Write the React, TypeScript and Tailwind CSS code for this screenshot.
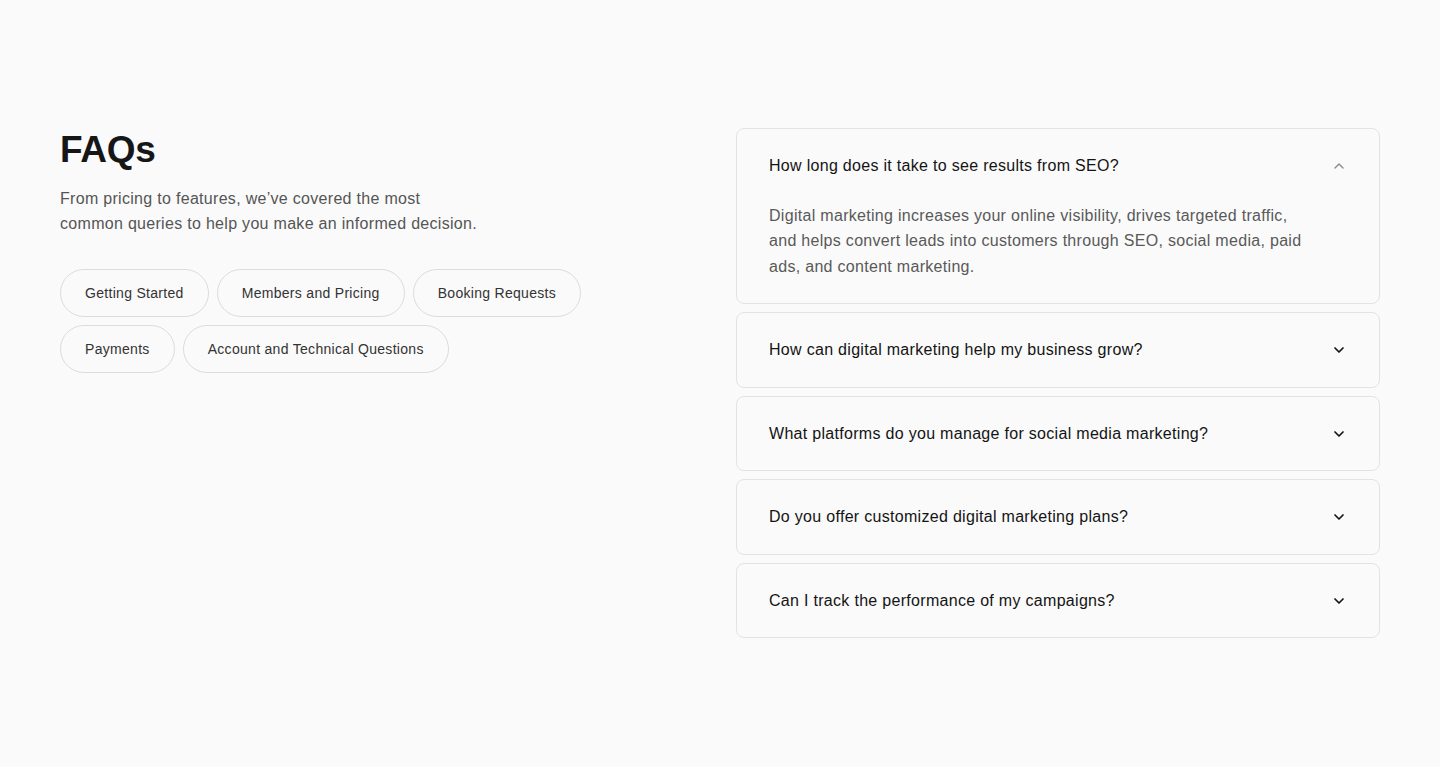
import React, { useState } from "react";

const categories = [
  "Getting Started",
  "Members and Pricing",
  "Booking Requests",
  "Payments",
  "Account and Technical Questions",
];

const faqs = [
  {
    q: "How long does it take to see results from SEO?",
    a: "Digital marketing increases your online visibility, drives targeted traffic, and helps convert leads into customers through SEO, social media, paid ads, and content marketing.",
  },
  { q: "How can digital marketing help my business grow?", a: "" },
  { q: "What platforms do you manage for social media marketing?", a: "" },
  { q: "Do you offer customized digital marketing plans?", a: "" },
  { q: "Can I track the performance of my campaigns?", a: "" },
];

function Chevron({ up }: { up?: boolean }) {
  return (
    <svg
      width="16"
      height="16"
      viewBox="0 0 24 24"
      fill="none"
      stroke="currentColor"
      strokeWidth={up ? 2 : 2.6}
      strokeLinecap="round"
      strokeLinejoin="round"
      className={up ? "text-[#8a8a8a]" : "text-[#141414]"}
    >
      {up ? <path d="m6 15 6-6 6 6" /> : <path d="m6 9 6 6 6-6" />}
    </svg>
  );
}

export default function App() {
  const [open, setOpen] = useState(0);
  return (
    <div
      className="min-h-[767px] bg-[#fafafa] text-[#1a1a1a]"
      style={{ fontFamily: '"Liberation Sans", Arial, sans-serif' }}
    >
      <div className="mx-auto grid max-w-[1440px] grid-cols-2 gap-8 px-[60px] pt-32 pb-32">
        <div>
          <h2 className="text-[37px] font-bold leading-[1.2] tracking-[-0.3px] text-[#161616]">
            FAQs
          </h2>
          <p className="mt-[14px] max-w-[425px] text-[16px] leading-[25px] tracking-[0.3px] text-[#555555]">
            From pricing to features, we’ve covered the most common queries to help you make an informed decision.
          </p>
          <div className="mt-[33px] flex max-w-[560px] flex-wrap gap-2">
            {categories.map((c) => (
              <button
                key={c}
                className="h-12 rounded-full border border-[#dcdcdc] px-6 text-[14px] tracking-[0.3px] text-[#333333]"
              >
                {c}
              </button>
            ))}
          </div>
        </div>
        <div className="flex flex-col gap-2">
          {faqs.map((f, i) => {
            const isOpen = open === i;
            return (
              <div
                key={f.q}
                className="rounded-lg border border-[#e3e3e3] bg-[#fafafa] px-8 py-6"
              >
                <button
                  onClick={() => setOpen(isOpen ? -1 : i)}
                  className="flex w-full items-center justify-between text-left"
                >
                  <span className="text-[16px] leading-[25.5px] tracking-[0.3px] text-[#141414]">{f.q}</span>
                  <Chevron up={isOpen} />
                </button>
                {isOpen && f.a && (
                  <p className="mt-6 max-w-[540px] text-[16px] leading-[25.6px] tracking-[0.3px] text-[#595959]">
                    {f.a}
                  </p>
                )}
              </div>
            );
          })}
        </div>
      </div>
    </div>
  );
}
